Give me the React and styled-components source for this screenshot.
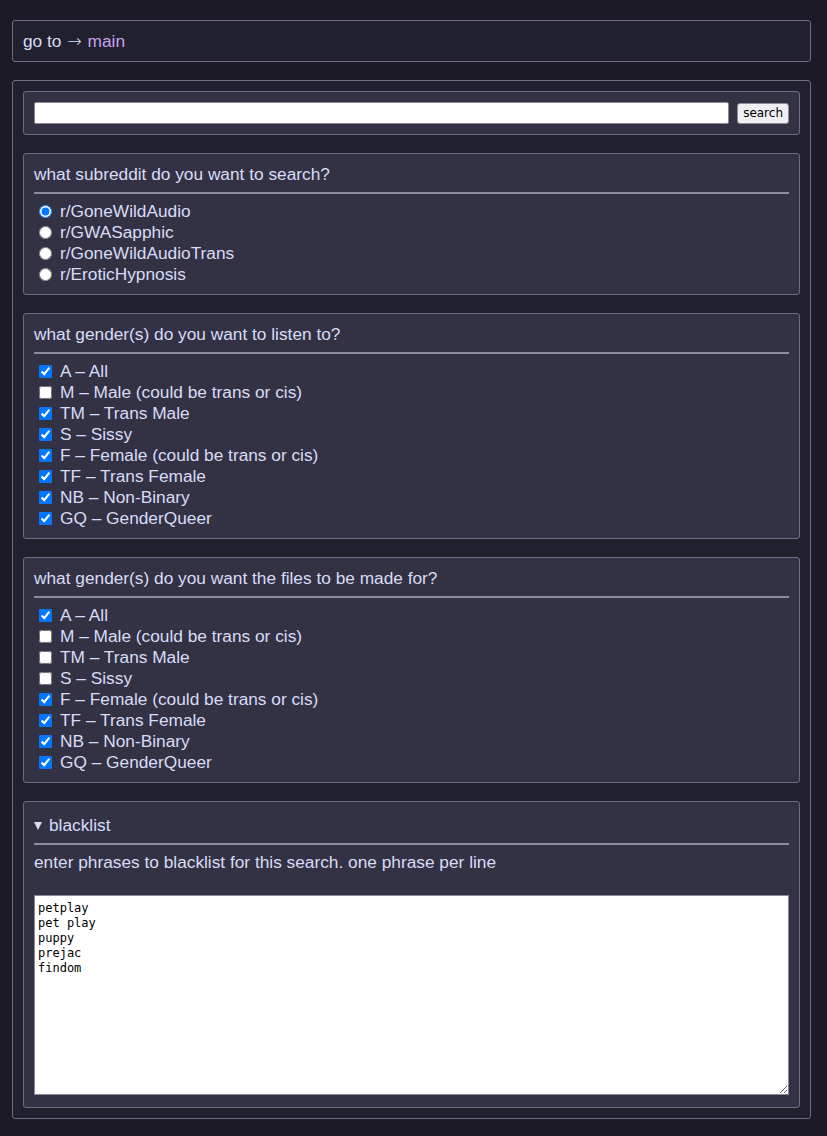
import React from "react"
import styled, { createGlobalStyle } from "styled-components"

const GlobalStyle = createGlobalStyle`
  html, body {
    margin: 0;
    background: #1b1a26;
  }
  body {
    font-family: "Liberation Sans", Arial, sans-serif;
    font-size: 17.3px;
    color: #d9dcf6;
  }
`

const Page = styled.div`
  display: flex;
  flex-direction: column;
  gap: 18px;
  padding: 20px 16px 16px 12px;
`

const Box = styled.div`
  background: #20202e;
  border: 1px solid #6c6c82;
  border-radius: 3px;
`

const NavBox = styled(Box)`
  padding: 11px 10px 10px;
  line-height: 19px;
`

const NavArrow = styled.span`
  font-family: "DejaVu Sans", sans-serif;
  font-weight: 200;
  margin: 0 1px;
`

const MainLink = styled.a`
  color: #c9a2f2;
  text-decoration: none;
`

const MainBox = styled(Box)`
  display: flex;
  flex-direction: column;
  gap: 18px;
  padding: 10px 10px 10px;
`

const Card = styled.div`
  background: #323244;
  border: 1px solid #6c6c82;
  border-radius: 3px;
  padding: 10px 10px 9px;
`

const SearchRow = styled(Card)`
  display: flex;
  align-items: center;
  gap: 8px;
  padding: 10px 10px 10px;
`

const SearchInput = styled.input`
  flex: 1;
  height: 22px;
  box-sizing: border-box;
  border: 1px solid #8a8a95;
  border-radius: 2px;
  background: #fff;
  margin: 0;
`

const SearchButton = styled.button`
  height: 21px;
  padding: 0 5px;
  margin: 0;
  font-family: "DejaVu Sans", sans-serif;
  font-size: 12px;
  color: #000;
  background: #efeff3;
  border: 1px solid #8c8c94;
  border-radius: 3px;
`

const Heading = styled.div`
  line-height: 21px;
  padding-top: ${(p) => (p.$summary ? "3px" : "0")};
  padding-bottom: 7px;
  border-bottom: 2px solid #8b8ba2;
  margin-bottom: 7px;
  display: flex;
  align-items: center;
  gap: 7px;
`

const Triangle = styled.span`
  display: inline-block;
  width: 0;
  height: 0;
  border-left: 4px solid transparent;
  border-right: 4px solid transparent;
  border-top: 8px solid #d9dcf6;
  margin-top: 1px;
`

const OptionList = styled.div`
  display: flex;
  flex-direction: column;
`

const Option = styled.label`
  display: flex;
  align-items: center;
  height: 21px;
  input {
    margin: 0 8px 0 5px;
    width: 13px;
    height: 13px;
  }
`

const Note = styled.p`
  margin: 3px 0 22px;
  line-height: 21px;
`

const Blacklist = styled.textarea`
  display: block;
  width: 100%;
  height: 200px;
  box-sizing: border-box;
  margin: 0 0 3px;
  padding: 5px 3px;
  font-family: "DejaVu Sans Mono", "Liberation Mono", monospace;
  font-size: 12px;
  line-height: 15px;
  color: #000;
  background: #fff;
  border: 1px solid #8a8a95;
  border-radius: 0;
`

const subreddits = [
  "r/GoneWildAudio",
  "r/GWASapphic",
  "r/GoneWildAudioTrans",
  "r/EroticHypnosis",
]

const genders = [
  "A – All",
  "M – Male (could be trans or cis)",
  "TM – Trans Male",
  "S – Sissy",
  "F – Female (could be trans or cis)",
  "TF – Trans Female",
  "NB – Non-Binary",
  "GQ – GenderQueer",
]

const listenChecked = [true, false, true, true, true, true, true, true]
const madeForChecked = [true, false, false, false, true, true, true, true]

const CheckGroup = ({ title, name, checked }) => (
  <Card>
    <Heading>{title}</Heading>
    <OptionList>
      {genders.map((g, i) => (
        <Option key={g}>
          <input type="checkbox" name={name} defaultChecked={checked[i]} />
          {g}
        </Option>
      ))}
    </OptionList>
  </Card>
)

const App = () => {
  return (
    <>
      <GlobalStyle />
      <Page>
        <NavBox>
          go to <NavArrow>→</NavArrow> <MainLink href="#">main</MainLink>
        </NavBox>
        <MainBox>
          <SearchRow>
            <SearchInput type="text" />
            <SearchButton>search</SearchButton>
          </SearchRow>

          <Card>
            <Heading>what subreddit do you want to search?</Heading>
            <OptionList>
              {subreddits.map((s, i) => (
                <Option key={s}>
                  <input type="radio" name="sub" defaultChecked={i === 0} />
                  {s}
                </Option>
              ))}
            </OptionList>
          </Card>

          <CheckGroup
            title="what gender(s) do you want to listen to?"
            name="listen"
            checked={listenChecked}
          />
          <CheckGroup
            title="what gender(s) do you want the files to be made for?"
            name="madefor"
            checked={madeForChecked}
          />

          <Card>
            <Heading $summary>
              <Triangle />
              blacklist
            </Heading>
            <Note>enter phrases to blacklist for this search. one phrase per line</Note>
            <Blacklist
              defaultValue={"petplay\npet play\npuppy\nprejac\nfindom"}
            />
          </Card>
        </MainBox>
      </Page>
    </>
  )
}

export default App
